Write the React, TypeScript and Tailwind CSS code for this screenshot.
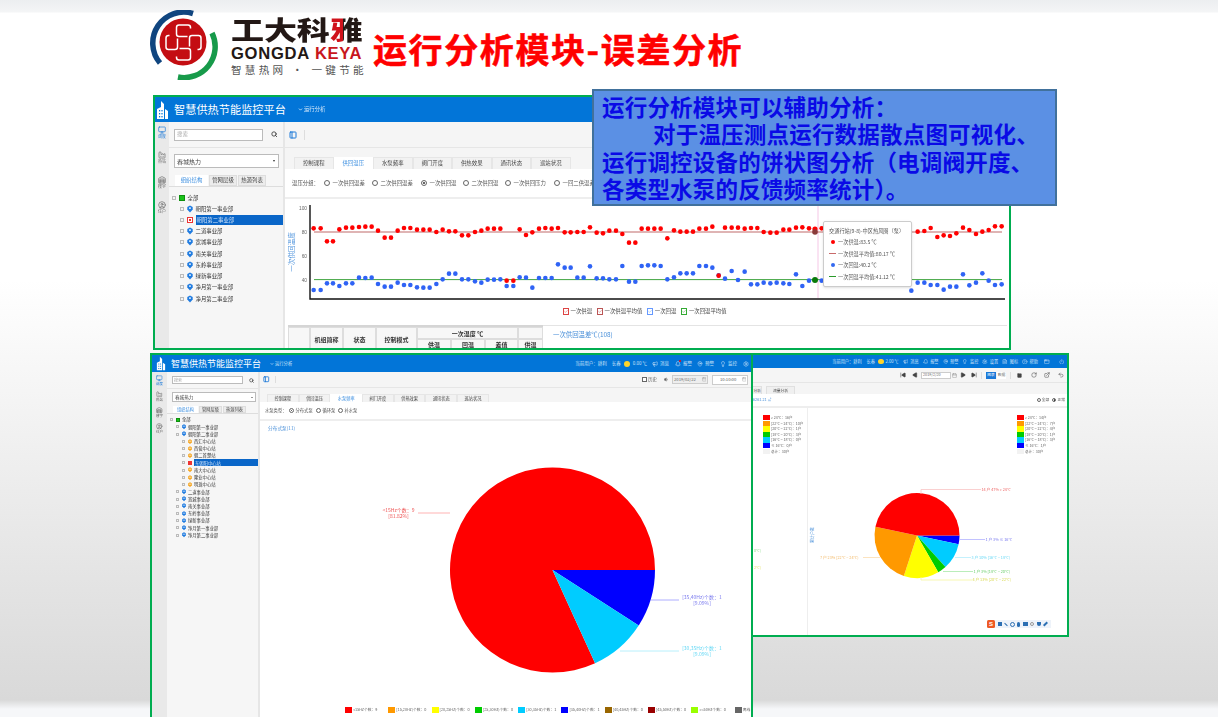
import React from "react";
import { Search, PanelLeft, Monitor, Factory, Warehouse, CircleUser, Bell, Megaphone, MapPin, Lightbulb, Settings, CircleHelp, Power, Calendar, SkipBack, SkipForward, Play, RotateCw, ExternalLink, Undo2, Volume1, Check, ChevronDown, FileText, Square, AppWindow } from "lucide-react";

const CJK = "font-['Noto_Sans_CJK_SC','Noto_Sans',sans-serif]";

function wedge(cx: number, cy: number, r: number, a0: number, a1: number) {
  const p = (a: number) => [cx + r * Math.cos((a * Math.PI) / 180), cy + r * Math.sin((a * Math.PI) / 180)];
  const [x0, y0] = p(a0);
  const [x1, y1] = p(a1);
  return `M${cx} ${cy}L${x0} ${y0}A${r} ${r} 0 ${a1 - a0 > 180 ? 1 : 0} 1 ${x1} ${y1}Z`;
}

function Building({ cls }: { cls: string }) {
  return (
    <svg viewBox="0 0 13 20" className={cls} fill="#fff">
      <path d="M5 1l3 3v15H1V9l4-2z" />
      <path d="M9 9l3 2v8H9z" />
      <rect x="3" y="10" width="1.2" height="1.4" fill="#0275d8" />
      <rect x="5.4" y="10" width="1.2" height="1.4" fill="#0275d8" />
      <rect x="3" y="13" width="1.2" height="1.4" fill="#0275d8" />
      <rect x="5.4" y="13" width="1.2" height="1.4" fill="#0275d8" />
      <rect x="3" y="16" width="1.2" height="1.4" fill="#0275d8" />
      <rect x="5.4" y="16" width="1.2" height="1.4" fill="#0275d8" />
    </svg>
  );
}

function Logo() {
  const g = "M7 -14 V-15 a2.5 2.5 0 0 0 -2.5 -2.5 H-4.5 a2.5 2.5 0 0 0 -2.5 2.5 V-8.5 a2.5 2.5 0 0 0 2.5 2.5 H4";
  return (
    <svg viewBox="150 10 70 70" className="w-[70px] h-[70px] shrink-0">
      <circle cx="183" cy="42" r="23.5" fill="#c40d12" />
      <path d="M193 13.5A31 31 0 0 0 160 63" fill="none" stroke="#10457f" strokeWidth="5.5" />
      <path d="M212 33A31 31 0 0 1 178 77" fill="none" stroke="#179a4a" strokeWidth="5.5" />
      <g transform="translate(183.5 42.5)" fill="none" stroke="#fff" strokeWidth="1.5">
        <path d={g} />
        <path d={g} transform="rotate(90)" />
        <path d={g} transform="rotate(180)" />
        <path d={g} transform="rotate(270)" />
      </g>
    </svg>
  );
}

function Header() {
  return (
    <div className="flex items-start pl-[150px] pt-[10px] h-[80px]">
      <Logo />
      <div className={`ml-[11px] w-[134px] flex flex-col ${CJK}`}>
        <div className="mt-[6px] h-[26px] leading-[26px] text-[33px] font-black text-[#231815] whitespace-nowrap tracking-[-0.1px] scale-y-[0.78]">
          工大科
          <span className="bg-[linear-gradient(90deg,#d0121b_38%,#231815_38%)] bg-clip-text text-transparent">雅</span>
        </div>
        <div className="mt-[3.5px] h-[15px] leading-[15px] text-[16.6px] font-bold font-['Liberation_Sans',sans-serif] text-[#231815] whitespace-nowrap tracking-[0.7px]">
          GONGDA<span className="ml-[5px] text-[#c8161d] tracking-[0.7px]">KEYA</span>
        </div>
        <div className="mt-[3px] h-[12px] leading-[12px] text-[10.6px] text-[#555] whitespace-nowrap tracking-[3.25px]">智慧热网 · 一键节能</div>
      </div>
      <div className={`ml-[8px] mt-[16px] h-[46px] leading-[46px] text-[34px] font-bold text-[#ff0000] whitespace-nowrap tracking-[1.6px] [-webkit-text-stroke:0.5px_#ff0000] ${CJK}`}>
        运行分析模块-误差分析
      </div>
    </div>
  );
}

function Callout() {
  return (
    <div className={`absolute left-[592px] top-[89px] w-[465px] h-[117px] border-2 border-[#41719c] bg-[#5b90e4] pl-[8px] pt-[2px] text-[22.5px] tracking-[0.2px] leading-[27.3px] font-bold text-[#0a0ae6] whitespace-nowrap z-20 ${CJK}`}>
      <div>运行分析模块可以辅助分析：</div>
      <div className="pl-[51px]">对于温压测点运行数据散点图可视化、</div>
      <div>运行调控设备的饼状图分析（电调阀开度、</div>
      <div>各类型水泵的反馈频率统计）。</div>
    </div>
  );
}

/* ---------- tree ---------- */
function NodeIcon({ color, cls }: { color: string; cls: string }) {
  return (
    <svg viewBox="0 0 10 12" className={cls}>
      <path d="M5 0l4.5 2.5v4.5L5 12 .5 7V2.5z" fill={color} />
      <circle cx="5" cy="4.5" r="1.6" fill="#fff" />
    </svg>
  );
}

const treeStyles = {
  lg: {
    row: "h-[11.23px] text-[5.4px]",
    exp: "w-[4px] h-[4px]",
    icon: "w-[6px] h-[8px] ml-[3px] mr-[2.5px]",
    pad: ["pl-[3px]", "pl-[11px]", "pl-[11px]"],
    sel: "w-[89px] h-[10.6px]",
    gap: "w-[6px] h-[6px] ml-[3px] mr-[2.5px]",
  },
  sm: {
    row: "h-[7.23px] text-[4.3px]",
    exp: "w-[3px] h-[3px]",
    icon: "w-[4px] h-[5.5px] ml-[3px] mr-[2px]",
    pad: ["pl-[3px]", "pl-[9px]", "pl-[15px]"],
    sel: "w-[65px] h-[7px]",
    gap: "w-[4px] h-[4px] ml-[3px] mr-[2px]",
  },
};

function TreeRow({ size, level, label, selected, color }: { size: "lg" | "sm"; level: number; label: string; selected?: boolean; color?: string }) {
  const s = treeStyles[size];
  return (
    <div className={`flex items-center whitespace-nowrap text-[#333] ${s.row} ${s.pad[level]}`}>
      <span className={`shrink-0 border-[0.5px] border-[#bbb] bg-[#f4f4f4] ${s.exp}`} />
      {level === 0 ? (
        <span className={`shrink-0 bg-[#19c219] border border-[#0e8f0e] ${s.gap}`} />
      ) : selected ? (
        <span className={`shrink-0 bg-white border border-[#e33] flex items-center justify-center ${s.gap}`}>
          <span className="w-[2px] h-[2px] bg-[#e33]" />
        </span>
      ) : (
        <NodeIcon color={color ?? "#1f7be0"} cls={`shrink-0 ${s.icon}`} />
      )}
      {selected ? (
        <span className={`bg-[#0a66c8] text-[#cfe2f8] flex items-center pl-[1px] ${s.sel}`}>{label}</span>
      ) : (
        <span>{label}</span>
      )}
    </div>
  );
}

function Rail({ cls, text, icon }: { cls: string; text: string; icon: string }) {
  const items: [typeof Monitor, string][] = [
    [Monitor, "调度"],
    [Factory, "热站"],
    [Warehouse, "楼宇"],
    [CircleUser, "住户"],
  ];
  return (
    <div className={`shrink-0 bg-[#e9e9e9] flex flex-col items-center ${cls}`}>
      {items.map(([I, t], i) => (
        <div key={t} className={`flex flex-col items-center ${text} ${i === 0 ? "text-[#1a78d8]" : "text-[#666]"}`}>
          <I className={icon} strokeWidth={2} />
          <span>{t}</span>
        </div>
      ))}
    </div>
  );
}

function Radio({ on, cls }: { on?: boolean; cls: string }) {
  return (
    <span className={`shrink-0 rounded-full border-[0.6px] border-[#666] bg-white flex items-center justify-center ${cls}`}>
      {on && <span className="w-[55%] h-[55%] rounded-full bg-[#333]" />}
    </span>
  );
}

/* ---------- scatter data (page coordinates) ---------- */
const a = (z: number) => 150 + z / 3;
const ay = (z: number) => 95 + z / 3;
const b = (z: number) => 590 + z / 3;
const by = (z: number) => 85 + z / 3;
const redA = [[491,400],[512,400],[531,439],[549,439],[568,403],[588,398],[607,398],[627,396],[646,395],[665,395],[684,407],[704,428],[723,428],[743,407],[762,399],[781,399],[801,404],[820,404],[839,404],[859,411],[878,404],[897,409],[916,409],[936,421],[955,421],[975,411],[994,407],[1013,401],[1032,401],[1051,401],[1070,557],[1090,557],[1109,403],[1128,420],[1147,412],[1167,401],[1186,399],[1205,401],[1224,399],[1244,412],[1262,412],[1282,411],[1301,411],[1320,397]];
const blueA = [[491,585],[512,585],[531,565],[549,565],[568,573],[588,565],[607,565],[627,548],[646,549],[665,548],[684,567],[704,575],[723,575],[743,563],[762,570],[781,570],[801,577],[820,578],[839,578],[859,567],[878,553],[897,536],[916,536],[936,553],[955,553],[975,559],[994,563],[1013,554],[1032,554],[1051,553],[1070,573],[1090,573],[1109,547],[1128,548],[1147,578],[1167,549],[1186,549],[1205,549],[1224,508],[1244,518],[1262,518],[1282,548],[1301,548],[1320,514]];
const redB = [[20,443],[39,445],[58,437],[78,437],[97,447],[117,473],[136,473],[155,431],[174,431],[193,431],[212,431],[232,460],[252,436],[271,440],[290,440],[309,440],[328,431],[348,431],[367,425],[386,572],[405,428],[425,428],[444,428],[464,431],[483,429],[502,429],[521,441],[541,443],[560,443],[580,434],[598,434],[618,428],[637,427],[657,430],[695,430],[983,440],[1003,438],[1022,429],[1042,456],[1061,451],[1080,453],[1099,445],[1119,428],[1138,435],[1158,447],[1177,440],[1196,435],[1215,424],[1235,424]];
const blueB = [[20,580],[39,580],[58,583],[78,583],[97,543],[117,590],[136,590],[155,543],[174,541],[193,541],[212,543],[232,583],[252,577],[271,565],[290,565],[309,565],[328,543],[348,543],[367,548],[386,571],[405,581],[425,558],[444,585],[464,560],[483,598],[502,598],[521,593],[541,595],[560,593],[580,595],[598,597],[618,568],[637,603],[657,587],[695,587],[964,617],[983,593],[1003,593],[1022,600],[1042,600],[1061,614],[1080,605],[1099,605],[1119,568],[1138,601],[1158,593],[1177,565],[1196,587],[1215,600],[1235,598]];

function Scatter() {
  return (
    <svg viewBox="285 199 724 106" className="w-[724px] h-[106px] block">
      <text x="294" y="252" transform="rotate(-90 294 252)" textAnchor="middle" fontSize="6.6" fill="#5b9bdf" fontFamily="'Noto Sans CJK SC',sans-serif">一次供回温度</text>
      {[["100", 208], ["80", 232], ["60", 256], ["40", 280]].map(([t, y]) => (
        <text key={t} x="307" y={Number(y) + 1.6} textAnchor="end" fontSize="4.8" fill="#666" fontFamily="'Liberation Sans',sans-serif">{t}</text>
      ))}
      <line x1="818" x2="818" y1="205" y2="298" stroke="#f3b9e0" strokeWidth="0.8" />
      <path d="M310 205V299H1005" fill="none" stroke="#111" strokeWidth="1.4" />
      <line x1="314" x2="1002" y1="232" y2="232" stroke="#bf6a6a" strokeWidth="1.1" />
      <line x1="314" x2="1002" y1="279.6" y2="279.6" stroke="#2a9a2a" strokeWidth="0.9" />
      {blueA.map(([x, y], i) => <circle key={i} cx={a(x)} cy={ay(y)} r="2.3" fill="#2f63f5" />)}
      {blueB.map(([x, y], i) => <circle key={i} cx={b(x)} cy={by(y)} r="2.3" fill="#2f63f5" />)}
      {redA.map(([x, y], i) => <circle key={i} cx={a(x)} cy={ay(y)} r="2.3" fill="#f00" />)}
      {redB.map(([x, y], i) => <circle key={i} cx={b(x)} cy={by(y)} r="2.3" fill="#f00" />)}
      <circle cx="815" cy="229" r="2.6" fill="#f00" />
      <circle cx="815" cy="232" r="2.8" fill="#8a3a3a" />
      <circle cx="815" cy="280" r="3" fill="#0a7a0a" />
    </svg>
  );
}

function Cb({ c, t, cls }: { c: string; t: string; cls: string }) {
  return (
    <div className={`flex items-center text-[5.4px] text-[#444] whitespace-nowrap ${cls}`}>
      <span className={`w-[6px] h-[7px] border-[0.7px] flex items-center justify-center mr-[1.5px] shrink-0 ${c}`}>
        <Check className="w-[5px] h-[5px]" strokeWidth={2.5} />
      </span>
      {t}
    </div>
  );
}

function TooltipRow({ dot, line, t }: { dot?: string; line?: string; t: string }) {
  return (
    <div className="flex items-center h-[11.5px] whitespace-nowrap">
      <span className="w-[7px] flex justify-center mr-[2px]">
        {dot && <span className={`w-[4px] h-[4px] rounded-full ${dot}`} />}
        {line && <span className={`w-[7px] h-[0.7px] ${line}`} />}
      </span>
      {t}
    </div>
  );
}

function Window1() {
  const tabs = ["控制课程", "供回温压", "水泵频率", "阀门开度", "供热效果", "通讯状态", "巡站状况"];
  const radios: [string, string, boolean?][] = [
    ["一次供回温差", "w-[48px]"],
    ["二次供回温差", "w-[49px]"],
    ["一次供回温", "w-[42px]", true],
    ["二次供回温", "w-[42px]"],
    ["一次供回压力", "w-[49px]"],
    ["一回二供温差", "w-[49px]"],
  ];
  const tree = ["朝阳第一事业部", "朝阳第二事业部", "二道事业部", "宽城事业部", "南关事业部", "东岭事业部", "绿新事业部", "净月第一事业部", "净月第二事业部"];
  return (
    <div className={`absolute left-[153px] top-[95px] w-[858px] h-[255px] border-2 border-[#00ad50] bg-white overflow-hidden z-0 ${CJK}`}>
      <div className="flex flex-col h-full blur-[0.3px]">
        <div className="h-[25px] shrink-0 bg-[#0275d8] flex items-center text-white">
          <Building cls="w-[13px] h-[20px] ml-[1px]" />
          <span className="ml-[5px] text-[11.2px] leading-none whitespace-nowrap">智慧供热节能监控平台</span>
          <span className="ml-[12px] text-[5.4px] whitespace-nowrap flex items-center text-[#d5e8fa]">
            <ChevronDown className="w-[5px] h-[5px] mr-[1px]" strokeWidth={4} />运行分析
          </span>
        </div>
        <div className="flex flex-1 min-h-0">
          <Rail cls="w-[14px] pt-[4px] gap-[12px]" text="text-[4px] leading-[5px]" icon="w-[8px] h-[8px]" />
          <div className="w-[116px] shrink-0 bg-[#f6f6f6] border-r-2 border-[#e6e6e6] flex flex-col">
            <div className="h-[26px] shrink-0 flex items-center pl-[5px] border-b border-[#e4e4e4]">
              <div className="w-[89px] h-[12px] bg-white border border-[#bbb] text-[5.4px] text-[#aaa] flex items-center pl-[2px]">搜索</div>
              <Search className="ml-[8px] w-[6.5px] h-[6.5px] text-[#333]" strokeWidth={3} />
            </div>
            <div className="ml-[5px] mt-[6px] w-[105px] h-[14px] bg-white border border-[#bbb] text-[6px] text-[#444] flex items-center justify-between px-[2px] shrink-0">
              春城热力<span className="w-0 h-0 border-x-[1.5px] border-t-[2px] border-x-transparent border-t-[#333] mr-[1px]" />
            </div>
            <div className="mt-[7px] h-[12px] flex pl-[6px] gap-[1px] border-b border-[#ddd] text-[5.4px] text-[#444] shrink-0">
              <div className="w-[33px] bg-white text-[#3d8fe0] flex items-center justify-center">组织结构</div>
              <div className="w-[28px] bg-[#ececec] border border-[#ddd] flex items-center justify-center">管网层级</div>
              <div className="w-[28px] bg-[#ececec] border border-[#ddd] flex items-center justify-center">热源列表</div>
            </div>
            <div className="mt-[5px]">
              <TreeRow size="lg" level={0} label="全部" />
              {tree.map((t, i) => (
                <TreeRow key={t} size="lg" level={1} label={t} selected={i === 1} />
              ))}
            </div>
          </div>
          <div className="flex-1 min-w-0 flex flex-col bg-white">
            <div className="h-[26px] shrink-0 bg-[#f5f5f5] border-b border-[#e6e6e6] flex items-center pl-[4px]">
              <PanelLeft className="w-[8px] h-[8px] text-[#1a78d8]" strokeWidth={3} />
              <span className="ml-[7px] w-px h-[10px] bg-[#ddd]" />
            </div>
            <div className="h-[21px] shrink-0 bg-[#f5f5f5] flex items-end pl-[9px]">
              {tabs.map((t, i) => (
                <div key={t} className={`w-[39.5px] h-[12px] flex items-center justify-center text-[5.4px] whitespace-nowrap border-t border-x ${i === 1 ? "bg-white text-[#3d8fe0] border-transparent" : "bg-[#f2f2f2] text-[#444] border-[#e6e6e6]"}`}>{t}</div>
              ))}
            </div>
            <div className="h-[30px] shrink-0 border-b-2 border-[#eee] flex items-center pl-[7px] text-[5.4px] text-[#555] whitespace-nowrap">
              <span className="w-[32px]">温压分组：</span>
              {radios.map(([t, w, on]) => (
                <span key={t} className={`flex items-center gap-[2.5px] ${w}`}>
                  <Radio on={on} cls="w-[6px] h-[6px]" />{t}
                </span>
              ))}
            </div>
            <div className="relative shrink-0">
              <Scatter />
              <div className="absolute left-[538px] top-[22px] w-[89px] h-[66px] bg-white border border-[#ccc] rounded-[2px] shadow-sm pl-[5px] pt-[3px] text-[5.2px] text-[#555]">
                <div className="h-[11.5px] flex items-center whitespace-nowrap">交通行站(9-8)-中区热风圈（泵）</div>
                <TooltipRow dot="bg-[#f00]" t="一次供温:83.5 ℃" />
                <TooltipRow line="bg-[#c86a6a]" t="一次供温平均值:80.17 ℃" />
                <TooltipRow dot="bg-[#3369f0]" t="一次回温:40.2 ℃" />
                <TooltipRow line="bg-[#2a9a2a]" t="一次回温平均值:41.12 ℃" />
              </div>
            </div>
            <div className="flex items-center h-[13px] shrink-0 pl-[278px] gap-[5px]">
              <Cb c="border-[#d44] text-[#d33]" t="一次供温" cls="" />
              <Cb c="border-[#b55] text-[#b33]" t="一次供温平均值" cls="" />
              <Cb c="border-[#69f] text-[#59e]" t="一次回温" cls="" />
              <Cb c="border-[#3a3] text-[#282]" t="一次回温平均值" cls="" />
            </div>
            <div className="mt-[7px] flex flex-1 min-h-0 overflow-hidden pl-[3px] pr-[2px]">
              <div className="w-[255px] shrink-0 grid grid-cols-[22px_33px_33px_41px_34px_34px_33px_25px] grid-rows-[12px_12px] bg-[#f7f7f7] border-t-2 border-[#d5d5d5] text-[6px] font-bold text-[#333] whitespace-nowrap">
                <div className="row-span-2 border border-[#ddd]" />
                <div className="row-span-2 border border-[#ddd] flex items-center justify-center">机组简称</div>
                <div className="row-span-2 border border-[#ddd] flex items-center justify-center">状态</div>
                <div className="row-span-2 border border-[#ddd] flex items-center justify-center">控制模式</div>
                <div className="col-span-3 border border-[#ddd] flex items-center justify-center">一次温度 ℃</div>
                <div className="border border-[#ddd]" />
                <div className="border border-[#ddd] flex justify-center">供温</div>
                <div className="border border-[#ddd] flex justify-center">回温</div>
                <div className="border border-[#ddd] flex justify-center">差值</div>
                <div className="border border-[#ddd] flex justify-center">供温</div>
              </div>
              <div className="flex-1 border-t border-[#e4e4e4] pl-[10px] pt-[4px] text-[6.4px] text-[#4a90d9] whitespace-nowrap">一次供回温差℃(108)</div>
            </div>
          </div>
        </div>
      </div>
    </div>
  );
}

/* ---------- window 2 ---------- */
const legend2: [string, string][] = [
  ["bg-[#ff0000]", "<15Hz个数：9"],
  ["bg-[#ff9900]", "[15,20Hz)个数：0"],
  ["bg-[#ffff00]", "[20,25Hz)个数：0"],
  ["bg-[#00cc00]", "[25,30Hz)个数：0"],
  ["bg-[#00ccff]", "[30,35Hz)个数：1"],
  ["bg-[#0000ff]", "[35,40Hz)个数：1"],
  ["bg-[#996600]", "[40,45Hz)个数：0"],
  ["bg-[#990000]", "[45,50Hz)个数：0"],
  ["bg-[#99ff00]", ">=50Hz个数：0"],
  ["bg-[#666666]", "离线"],
];

function Pie1() {
  const t: React.SVGProps<SVGTextElement> = { fontSize: 5, textAnchor: "middle", fontFamily: "'Noto Sans CJK SC',sans-serif" };
  return (
    <svg viewBox="260 433 491 272" className="w-[491px] h-[272px] block">
      <path d={wedge(552.5, 570, 102.5, 65.45, 360)} fill="#f00" />
      <path d={wedge(552.5, 570, 102.5, 0, 32.73)} fill="#00f" />
      <path d={wedge(552.5, 570, 102.5, 32.73, 65.45)} fill="#0cf" />
      <path d="M418 513H450" stroke="#ffb3b3" strokeWidth="1" fill="none" />
      <text x="398.5" y="512" fill="#ee5555" {...t}>&lt;15Hz个数：9</text>
      <text x="398.5" y="518" fill="#ee5555" {...t}>[81.82%]</text>
      <path d="M651 600H679" stroke="#9a9aff" strokeWidth="0.8" fill="none" />
      <text x="702" y="599" fill="#7a7aee" {...t}>[35,40Hz)个数：1</text>
      <text x="702" y="605" fill="#7a7aee" {...t}>[9.09%]</text>
      <path d="M620 651H679" stroke="#a6ecfb" strokeWidth="0.8" fill="none" />
      <text x="702" y="650" fill="#66d8f5" {...t}>[30,35Hz)个数：1</text>
      <text x="702" y="656" fill="#66d8f5" {...t}>[9.09%]</text>
    </svg>
  );
}

function Window2() {
  const tabs = ["控制课程", "供回温压", "水泵频率", "阀门开度", "供热效果", "通讯状态", "巡站状况"];
  const top = ["二道事业部", "宽城事业部", "南关事业部", "东岭事业部", "绿新事业部", "净月第一事业部", "净月第二事业部"];
  const sub = ["西汇中心站", "西俊中心站", "朝二首楚站", "东朝阳中心站", "南大中心站", "隆业中心站", "明珠中心站"];
  return (
    <div className={`absolute left-[150px] top-[353px] w-[603px] h-[370px] border-2 border-[#00ad50] bg-white overflow-hidden z-10 ${CJK}`}>
      <div className="flex flex-col h-full blur-[0.25px]">
        <div className="h-[17px] shrink-0 bg-[#0275d8] flex items-center text-white whitespace-nowrap">
          <Building cls="w-[10px] h-[15px] ml-[4px]" />
          <span className="ml-[5px] text-[9px] leading-none">智慧供热节能监控平台</span>
          <span className="ml-[9px] text-[4.3px] flex items-center text-[#d5e8fa]">
            <ChevronDown className="w-[4px] h-[4px] mr-[1px]" strokeWidth={4} />运行分析
          </span>
          <div className="ml-auto flex items-center text-[4.5px] text-[#cfe4f8] pr-[2px]">
            <span>当前用户：耕利</span>
            <span className="ml-[5px]">长春</span>
            <span className="ml-[3px] w-[6px] h-[6px] rounded-full bg-[#ffd42a]" />
            <span className="ml-[3px]">0.00 ℃</span>
            <Megaphone className="ml-[5px] w-[6px] h-[6px]" />
            <span className="ml-[2px]">消息</span>
            <span className="relative ml-[6px]">
              <Bell className="w-[6px] h-[6px]" />
              <span className="absolute -top-[1px] right-0 w-[2px] h-[2px] rounded-full bg-[#f00]" />
            </span>
            <span className="ml-[2px]">报警</span>
            <MapPin className="ml-[5px] w-[6px] h-[6px]" />
            <span className="ml-[2px]">预警</span>
            <Lightbulb className="ml-[6px] w-[6px] h-[6px]" />
            <span className="ml-[2px]">监控</span>
            <Settings className="ml-[6px] w-[6px] h-[6px]" />
          </div>
        </div>
        <div className="flex flex-1 min-h-0">
          <Rail cls="w-[15px] pt-[3px] gap-[5.5px]" text="text-[3.4px] leading-[4px]" icon="w-[6.5px] h-[6.5px]" />
          <div className="w-[93px] shrink-0 bg-[#f6f6f6] border-r-2 border-[#e6e6e6] flex flex-col">
            <div className="h-[17px] shrink-0 flex items-center pl-[5px] border-b border-[#e4e4e4]">
              <div className="w-[71px] h-[8px] bg-white border border-[#bbb] text-[4px] text-[#aaa] flex items-center pl-[1px]">搜索</div>
              <Search className="ml-[6px] w-[5px] h-[5px] text-[#333]" strokeWidth={3} />
            </div>
            <div className="ml-[5px] mt-[3px] w-[84px] h-[10px] bg-white border border-[#bbb] text-[4.6px] text-[#444] flex items-center justify-between px-[2px] shrink-0">
              春城热力<span className="w-0 h-0 border-x-[1.2px] border-t-[1.6px] border-x-transparent border-t-[#333]" />
            </div>
            <div className="mt-[4px] h-[8px] flex pl-[6px] gap-[1px] border-b border-[#ddd] text-[4.2px] text-[#444] shrink-0">
              <div className="w-[25px] bg-white text-[#3d8fe0] flex items-center justify-center">组织结构</div>
              <div className="w-[23px] bg-[#ececec] border border-[#ddd] flex items-center justify-center">管网层级</div>
              <div className="w-[23px] bg-[#ececec] border border-[#ddd] flex items-center justify-center">热源列表</div>
            </div>
            <div className="mt-[2px]">
              <TreeRow size="sm" level={0} label="全部" />
              <TreeRow size="sm" level={1} label="朝阳第一事业部" />
              <TreeRow size="sm" level={1} label="朝阳第二事业部" />
              {sub.map((t, i) => (
                <TreeRow key={t} size="sm" level={2} label={t} color="#f5a623" selected={i === 3} />
              ))}
              {top.map((t) => (
                <TreeRow key={t} size="sm" level={1} label={t} />
              ))}
            </div>
          </div>
          <div className="flex-1 min-w-0 flex flex-col">
            <div className="h-[16px] shrink-0 bg-[#f5f5f5] border-b border-[#e6e6e6] flex items-center pl-[3px] pr-[3px]">
              <PanelLeft className="w-[6.5px] h-[6.5px] text-[#1a78d8]" strokeWidth={3} />
              <span className="ml-[5px] w-px h-[7px] bg-[#ddd]" />
              <span className="ml-auto w-[5px] h-[5px] border-[0.7px] border-[#666] bg-white" />
              <span className="ml-[1px] text-[4.4px] text-[#555]">历史</span>
              <Volume1 className="ml-[7px] w-[5px] h-[5px] text-[#666]" fill="#666" />
              <span className="ml-[3px] w-[36px] h-[9px] bg-[#eee] border border-[#ccc] flex items-center justify-between px-[1px] text-[4.2px] text-[#666]">
                2019/02/22<Calendar className="w-[4.5px] h-[4.5px] text-[#999]" />
              </span>
              <span className="ml-[4px] w-[36px] h-[10px] bg-white border border-[#ccc] flex items-center justify-between px-[1px] text-[4.2px] text-[#555]">
                <span className="pl-[6px]">10:10:00</span><Calendar className="w-[4.5px] h-[4.5px] text-[#999]" />
              </span>
            </div>
            <div className="h-[14px] shrink-0 bg-[#f5f5f5] flex items-end pl-[7px]">
              {tabs.map((t, i) => (
                <div key={t} className={`w-[31.7px] h-[8px] flex items-center justify-center text-[4.2px] whitespace-nowrap border-t border-x ${i === 2 ? "bg-white text-[#3d8fe0] border-transparent" : "bg-[#f2f2f2] text-[#444] border-[#e6e6e6]"}`}>{t}</div>
              ))}
            </div>
            <div className="h-[19px] shrink-0 border-b-2 border-[#eee] flex items-center pl-[5px] text-[4.3px] text-[#555] whitespace-nowrap">
              <span className="w-[24px]">水泵类型：</span>
              <Radio on cls="w-[4.5px] h-[4.5px]" /><span className="ml-[2px] w-[20.5px]">分布式泵</span>
              <Radio cls="w-[4.5px] h-[4.5px]" /><span className="ml-[2px] w-[15.5px]">循环泵</span>
              <Radio cls="w-[4.5px] h-[4.5px]" /><span className="ml-[2px]">补水泵</span>
            </div>
            <div className="h-[12px] shrink-0 flex items-center pl-[8px] pt-[4px] text-[4.7px] text-[#4a90d9]">分布式泵(11)</div>
            <Pie1 />
            <div className="h-[10px] shrink-0 flex items-center pl-[85px] whitespace-nowrap">
              {legend2.map(([c, t]) => (
                <div key={t} className="w-[43.3px] shrink-0 flex items-center text-[3.8px] text-[#666]">
                  <span className={`w-[7px] h-[6px] mr-[1px] shrink-0 ${c}`} />{t}
                </div>
              ))}
            </div>
          </div>
        </div>
      </div>
    </div>
  );
}

/* ---------- window 3 ---------- */
const swatches = ["bg-[#ff0000]", "bg-[#ff9900]", "bg-[#ffff00]", "bg-[#00cc00]", "bg-[#00ccff]", "bg-[#0000ff]", "bg-[#f2f2f2]"];

function SmallLegend({ rows }: { rows: string[] }) {
  return (
    <div className="flex flex-col">
      {rows.map((t, i) => (
        <div key={i} className="h-[5.6px] flex items-center text-[3.6px] text-[#666] whitespace-nowrap">
          <span className={`w-[6.5px] h-[5.4px] mr-[1.5px] shrink-0 ${swatches[i]}`} />{t}
        </div>
      ))}
    </div>
  );
}

function Pie2() {
  const cx = 919, cy = 538.5, r = 42.5;
  const slices: [number, number, string][] = [[0, 12, "#00f"], [12, 48, "#0cf"], [48, 60, "#0c0"], [60, 108, "#ff0"], [108, 192, "#f90"], [192, 360, "#f00"]];
  const f: React.SVGProps<SVGTextElement> = { fontSize: 3.8, fontFamily: "'Noto Sans CJK SC',sans-serif" };
  return (
    <svg viewBox="810 460 257 174" className="w-[257px] h-[174px] block">
      {slices.map(([x, y, c]) => <path key={c} d={wedge(cx, cy, r, x, y)} fill={c} />)}
      <text x="815" y="538" transform="rotate(-90 815 538)" textAnchor="middle" fontSize="4" fill="#4a90d9" dy="1.4" fontFamily="'Noto Sans CJK SC',sans-serif">累计户数</text>
      <path d="M923 497V492.5H983" fill="none" stroke="#f9c4c4" strokeWidth="0.8" />
      <text x="983.5" y="494.3" fill="#ee6666" {...f}>14 户 47% &gt; 24℃</text>
      <path d="M961 542.5H987" fill="none" stroke="#b3b3ff" strokeWidth="0.8" />
      <text x="987.5" y="543.8" fill="#7777ee" {...f}>1 户 3% ≤ 16℃</text>
      <path d="M957 560.5H973" fill="none" stroke="#b5eefc" strokeWidth="0.8" />
      <text x="973.5" y="561.8" fill="#66d8f5" {...f}>3 户 10% [16℃ ~ 18℃)</text>
      <path d="M945 574.5H975" fill="none" stroke="#a8e8a8" strokeWidth="0.8" />
      <text x="975.5" y="575.8" fill="#66cc66" {...f}>1 户 3% [18℃ ~ 20℃)</text>
      <path d="M923 580V583H974" fill="none" stroke="#f5f5a0" strokeWidth="0.8" />
      <text x="974.5" y="584.3" fill="#d8d850" {...f}>4 户 13% [20℃ ~ 22℃)</text>
      <path d="M865 560.5H882" fill="none" stroke="#fbdcae" strokeWidth="0.8" />
      <text x="822" y="561.8" fill="#f2b866" {...f}>7 户 23% [22℃ ~ 24℃)</text>
    </svg>
  );
}

function HeadItem({ icon, t, cls }: { icon: React.ReactNode; t: string; cls: string }) {
  return (
    <span className={`flex items-center gap-[2px] ${cls}`}>
      {icon}
      {t}
    </span>
  );
}

function Window3() {
  const ic = "w-[5.5px] h-[5.5px]";
  const tb = "w-[6px] h-[6px] text-[#444]";
  return (
    <div className={`absolute left-[751px] top-[353px] w-[318px] h-[284px] border-[2.4px] border-[#00ad50] bg-white overflow-hidden z-0 ${CJK}`}>
      <div className="flex flex-col h-full blur-[0.25px]">
        <div className="h-[13px] shrink-0 bg-[#0275d8] flex items-center justify-end pr-[3px] text-[4.2px] text-[#cfe4f8] whitespace-nowrap">
          <span>当前用户：耕利</span>
          <span className="ml-[5px]">长春</span>
          <span className="ml-[3px] w-[5.5px] h-[5.5px] rounded-full bg-[#ffd42a]" />
          <span className="ml-[2px]">2.00 ℃</span>
          <HeadItem cls="ml-[4px]" icon={<Megaphone className={ic} />} t="消息" />
          <HeadItem cls="ml-[4px]" icon={<Bell className={ic} />} t="报警" />
          <HeadItem cls="ml-[4px]" icon={<MapPin className={ic} />} t="预警" />
          <HeadItem cls="ml-[4px]" icon={<Lightbulb className={ic} />} t="监控" />
          <HeadItem cls="ml-[4px]" icon={<Settings className={ic} />} t="设置" />
          <HeadItem cls="ml-[4px]" icon={<FileText className={ic} />} t="图标" />
          <HeadItem cls="ml-[4px]" icon={<CircleHelp className={ic} />} t="帮助" />
          <AppWindow className={`ml-[6px] ${ic}`} />
          <Power className={`ml-[9px] ${ic}`} />
        </div>
        <div className="h-[15px] shrink-0 bg-[#f5f5f5] border-b border-[#e6e6e6] flex items-center justify-end pr-[3px]">
          <SkipBack className={tb} fill="#444" />
          <Play className={`ml-[6px] rotate-180 ${tb}`} fill="#444" />
          <span className="ml-[3px] w-[30px] h-[7px] bg-white border border-[#ccc] text-[3.8px] text-[#666] flex items-center pl-[1px]">2019/2/20</span>
          <Calendar className="ml-[1px] w-[5px] h-[5px] text-[#888]" />
          <Play className={`ml-[3px] ${tb}`} fill="#444" />
          <SkipForward className={`ml-[5px] ${tb}`} fill="#444" />
          <span className="ml-[4px] w-px h-[7px] bg-[#ddd]" />
          <span className="ml-[4px] w-[10px] h-[7px] bg-[#1a78d8] text-white text-[3.8px] flex items-center justify-center">图表</span>
          <span className="ml-[1px] w-[9px] h-[7px] bg-white text-[#666] text-[3.8px] flex items-center justify-center">数据</span>
          <span className="ml-[4px] w-px h-[7px] bg-[#ddd]" />
          <Square className="ml-[6px] w-[5px] h-[5px] text-[#444]" fill="#444" />
          <RotateCw className={`ml-[9px] ${tb}`} />
          <ExternalLink className={`ml-[7px] ${tb}`} />
          <Undo2 className={`ml-[8px] ${tb}`} />
        </div>
        <div className="h-[11px] shrink-0 bg-[#f5f5f5] flex items-end text-[3.8px] text-[#444]">
          <div className="w-[9px] h-[8px] border-r border-t border-[#e0e0e0] bg-[#f0f0f0] flex items-center justify-end whitespace-nowrap overflow-hidden">分析</div>
          <div className="ml-[4px] w-[29px] h-[8px] border-x border-t border-[#e0e0e0] bg-[#f0f0f0] flex items-center justify-center whitespace-nowrap">流量分析</div>
        </div>
        <div className="h-[14px] shrink-0 border-b-2 border-[#eee] flex items-center justify-between pr-[2px] text-[3.8px] whitespace-nowrap">
          <span className="text-[#4a90d9]">6261.21 ㎡</span>
          <span className="flex items-center text-[#555]">
            <Radio cls="w-[4px] h-[4px]" /><span className="ml-[1px]">全部</span>
            <Radio on cls="ml-[3px] w-[4px] h-[4px]" /><span className="ml-[1px]">正常</span>
          </span>
        </div>
        <div className="relative flex flex-1 min-h-0">
          <div className="w-[55px] shrink-0 border-r border-[#eee] pl-[10px] pt-[7px]">
            <SmallLegend rows={["> 24℃：16户", "[22℃ ~ 24℃)：10户", "[20℃ ~ 22℃)：1户", "[18℃ ~ 20℃)：3户", "[16℃ ~ 18℃)：0户", "≤ 16℃：0户", "总计：30户"]} />
            <div className="mt-[94px] -ml-[10px] pl-[1px] text-[3.8px] text-[#8fdc8f]">0℃)</div>
            <div className="mt-[11px] -ml-[10px] pl-[1px] text-[3.8px] text-[#e4e470]">2℃)</div>
          </div>
          <div className="flex-1 flex flex-col min-w-0">
            <div className="pt-[7px] pl-[209px] h-[49px] shrink-0">
              <SmallLegend rows={["> 24℃：14户", "[22℃ ~ 24℃)：7户", "[20℃ ~ 22℃)：4户", "[18℃ ~ 20℃)：1户", "[16℃ ~ 18℃)：3户", "≤ 16℃：1户", "总计：30户"]} />
            </div>
            <Pie2 />
          </div>
          <div className="absolute left-[234px] bottom-[7px] w-[64px] h-[8px] bg-[#eef3fa] flex items-center gap-[1.5px]">
            <span className="w-[8px] h-[8px] rounded-[1.5px] bg-[#ee5a24] text-white text-[6px] leading-[8px] font-bold text-center font-['Liberation_Sans',sans-serif]">S</span>
            <span className="w-[4px] h-[4px] bg-[#2c6fb3] ml-[1px]" />
            <span className="w-[4px] h-[1px] bg-[#2c6fb3] rotate-45 mx-[0.5px]" />
            <span className="w-[5px] h-[5px] rounded-full border border-[#2c6fb3]" />
            <span className="w-[3px] h-[5px] rounded-full bg-[#2c6fb3] ml-[1px]" />
            <span className="w-[5px] h-[4px] bg-[#2c6fb3] ml-[1px]" />
            <span className="w-[4px] h-[4px] rounded-full border border-[#999] ml-[1px]" />
            <span className="w-[4px] h-[4px] bg-[#2c6fb3] rounded-b-[2px] ml-[1px]" />
            <span className="w-[5px] h-[2px] bg-[#2c6fb3] -rotate-45 ml-[1px]" />
          </div>
        </div>
      </div>
    </div>
  );
}

export default function App() {
  return (
    <div className="relative w-[1221px] h-[717px] overflow-hidden bg-white">
      <div className="w-[1218px] h-[717px] bg-[linear-gradient(180deg,#eceef0_0,#f4f5f6_12px,#ffffff_13px,#ffffff_280px,#d9d9d9_700px,#f6f7f9_709px)]">
        <Header />
      </div>
      <Window1 />
      <Window3 />
      <Window2 />
      <Callout />
    </div>
  );
}
